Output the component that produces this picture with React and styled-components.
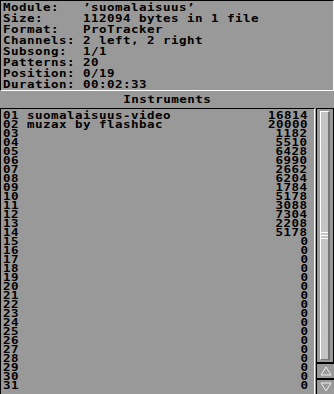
import React from "react";
import styled, { createGlobalStyle } from "styled-components";

const Global = createGlobalStyle`
  html, body { margin: 0; padding: 0; background: #999999; }
  body {
    width: 334px; height: 394px; overflow: hidden;
    font-family: "DejaVu Sans Mono", "Liberation Mono", monospace;
    font-weight: bold; font-size: 10px; color: #000;
  }
  * { box-sizing: border-box; }
`;

const Window = styled.div`
  width: 334px; height: 394px;
  display: flex; flex-direction: column;
  background: #999999;
`;

/* Wide pixel-font look: 8px per character cell */
const Text = styled.span`
  display: inline-block;
  white-space: pre;
  letter-spacing: 0.379px;
  transform: scaleX(1.25);
  transform-origin: ${(p) => p.$origin || "left"} center;
`;

const InfoPanel = styled.div`
  height: 91px;
  border-top: 1px solid #000;
  border-left: 1px solid #000;
  border-bottom: 1px solid #fff;
  border-right: 1px solid #fff;
  padding: 1px 0 0 2px;
  display: grid;
  grid-template-columns: 80px 1fr;
  grid-auto-rows: 11px;
  line-height: 11px;
`;

const Header = styled.div`
  height: 17px;
  line-height: 17px;
  text-align: center;
  padding-left: 1px;
`;

const Body = styled.div`
  flex: 1;
  display: flex;
  min-height: 0;
`;

const ListBox = styled.div`
  width: 315px;
  border-top: 1px solid #000;
  border-left: 1px solid #000;
  border-right: 1px solid #fff;
  padding: 2px 6px 0 2px;
  overflow: hidden;
`;

const Row = styled.div`
  display: grid;
  grid-template-columns: 24px 1fr auto;
  height: 9px;
  line-height: 9px;
`;

const SizeCell = styled.span`text-align: right;`;

const ScrollBar = styled.div`
  width: 18px;
  margin-left: 1px;
  display: flex;
  flex-direction: column;
  border-left: 1px solid #000;
  border-top: 1px solid #000;
`;

const Track = styled.div`
  flex: 1;
  padding: 2px 3px 2px 3px;
  display: flex;
  border-right: 1px solid #000;
`;

const Thumb = styled.div`
  flex: 1;
  background: #c4c4c4;
  border-left: 1px solid #fff;
  border-top: 1px solid #fff;
  border-right: 2px solid #777;
  border-bottom: 1px solid #777;
  display: flex;
  align-items: center;
  justify-content: center;
`;

const Grip = styled.svg`
  display: block;
`;

const ArrowButton = styled.div`
  height: ${(p) => p.$h}px;
  border-top: 2px solid #000;
  display: flex;
  align-items: center;
  justify-content: center;
`;

const info = [
  ["Module:", "’suomalaisuus’"],
  ["Size:", "112094 bytes in 1 file"],
  ["Format:", "ProTracker"],
  ["Channels:", "2 left, 2 right"],
  ["Subsong:", "1/1"],
  ["Patterns:", "20"],
  ["Position:", "0/19"],
  ["Duration:", "00:02:33"],
];

const sizes = [16814, 20000, 1182, 5510, 6428, 6990, 2662, 6204, 1784, 5178, 3088, 7304, 2208, 5178];
const names = { 1: "suomalaisuus-video", 2: "muzax by flashbac" };

const rows = Array.from({ length: 31 }, (_, i) => ({
  n: String(i + 1).padStart(2, "0"),
  name: names[i + 1] || "",
  size: sizes[i] !== undefined ? sizes[i] : 0,
}));

export default function App() {
  return (
    <>
      <Global />
      <Window>
        <InfoPanel>
          {info.map(([l, v]) => (
            <React.Fragment key={l}>
              <span><Text>{l}</Text></span>
              <span><Text>{v}</Text></span>
            </React.Fragment>
          ))}
        </InfoPanel>
        <Header><Text $origin="center">Instruments</Text></Header>
        <Body>
          <ListBox>
            {rows.map((r) => (
              <Row key={r.n}>
                <span><Text>{r.n}</Text></span>
                <span><Text>{r.name}</Text></span>
                <SizeCell><Text $origin="right">{r.size}</Text></SizeCell>
              </Row>
            ))}
          </ListBox>
          <ScrollBar>
            <Track>
              <Thumb>
                <Grip width="7" height="7" viewBox="0 0 7 7">
                  <rect x="0" y="0" width="7" height="1" fill="#fff" />
                  <rect x="0" y="3" width="7" height="1" fill="#fff" />
                  <rect x="0" y="6" width="7" height="1" fill="#fff" />
                </Grip>
              </Thumb>
            </Track>
            <ArrowButton $h={16}>
              <svg width="12" height="10" viewBox="0 0 12 10">
                <path d="M6 1 L11 9 L1 9 Z" fill="none" stroke="#eee" strokeWidth="1" />
              </svg>
            </ArrowButton>
            <ArrowButton $h={16}>
              <svg width="12" height="10" viewBox="0 0 12 10">
                <path d="M1 1 L11 1 L6 9 Z" fill="none" stroke="#eee" strokeWidth="1" />
              </svg>
            </ArrowButton>
          </ScrollBar>
        </Body>
      </Window>
    </>
  );
}
